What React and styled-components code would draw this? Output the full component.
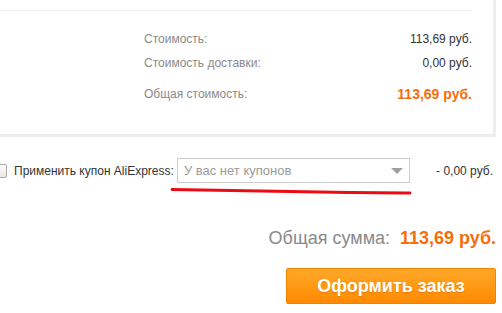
import React from "react";
import styled, { createGlobalStyle } from "styled-components";

const GlobalStyle = createGlobalStyle`
  html, body {
    margin: 0;
    padding: 0;
    background: #fff;
    font-family: "Liberation Sans", Arial, sans-serif;
    overflow: hidden;
  }
`;

const Page = styled.div`
  width: 502px;
  height: 313px;
  box-sizing: border-box;
  padding-right: 6px;
`;

const Card = styled.div`
  background: #fff;
  border-right: 3px solid #eeeeee;
  border-bottom: 3px solid #eeeeee;
  padding: 10px 21px 28px 0;
`;

const Divider = styled.div`
  height: 1px;
  background: #efefef;
`;

const Summary = styled.div`
  margin-left: 144px;
  padding-top: 16px;
  display: flex;
  flex-direction: column;
`;

const Row = styled.div`
  display: flex;
  justify-content: space-between;
  align-items: center;
  height: 24px;
  margin-top: ${(p) => (p.$total ? "7px" : "0")};
`;

const Label = styled.span`
  font-size: 12px;
  color: #8a8a8a;
`;

const Value = styled.span`
  font-size: ${(p) => (p.$accent ? "14px" : "12px")};
  font-weight: ${(p) => (p.$accent ? 700 : 400)};
  color: ${(p) => (p.$accent ? "#f76d0c" : "#333")};
`;

const CouponRow = styled.div`
  position: relative;
  display: flex;
  align-items: center;
  margin-top: 21px;
  height: 25px;
`;

const Check = styled.span`
  width: 12px;
  height: 12px;
  margin-left: -7px;
  border: 1px solid #a9a9a9;
  border-radius: 2px;
  background: linear-gradient(#fdfdfd, #e6e6e6);
  flex-shrink: 0;
`;

const CouponLabel = styled.span`
  margin-left: 7px;
  font-size: 12px;
  color: #333;
`;

const Select = styled.div`
  margin-left: 3px;
  width: 233px;
  height: 25px;
  box-sizing: border-box;
  border: 1px solid #cccccc;
  display: flex;
  align-items: center;
  justify-content: space-between;
  padding: 0 6px 0 6px;
  font-size: 13px;
  color: #9a9a9a;
`;

const Arrow = styled.span`
  width: 0;
  height: 0;
  border-left: 6px solid transparent;
  border-right: 6px solid transparent;
  border-top: 6px solid #a0a0a0;
`;

const Discount = styled.span`
  margin-left: auto;
  font-size: 12px;
  color: #333;
  margin-right: 3px;
`;

const Underline = styled.svg`
  position: absolute;
  left: 170px;
  top: 29px;
`;

const TotalRow = styled.div`
  display: flex;
  justify-content: flex-end;
  align-items: baseline;
  margin-top: 45px;
  font-size: 18px;
`;

const TotalLabel = styled.span`
  color: #8a8a8a;
  margin-right: 10px;
`;

const TotalValue = styled.span`
  color: #f76d0c;
  font-weight: 700;
`;

const Actions = styled.div`
  display: flex;
  justify-content: flex-end;
  margin-top: 19px;
`;

const OrderButton = styled.button`
  width: 210px;
  height: 36px;
  border: 1px solid #f08300;
  border-radius: 2px;
  background: linear-gradient(#ffa829, #ff8a00);
  color: #fff;
  font-family: "Liberation Sans", Arial, sans-serif;
  font-size: 18px;
  font-weight: 700;
  text-shadow: 0 1px 1px rgba(180, 80, 0, 0.35);
  cursor: pointer;
`;

export default function App() {
  return (
    <Page>
      <GlobalStyle />
      <Card>
        <Divider />
        <Summary>
          <Row>
            <Label>Стоимость:</Label>
            <Value>113,69 руб.</Value>
          </Row>
          <Row>
            <Label>Стоимость доставки:</Label>
            <Value>0,00 руб.</Value>
          </Row>
          <Row $total>
            <Label>Общая стоимость:</Label>
            <Value $accent>113,69 руб.</Value>
          </Row>
        </Summary>
      </Card>
      <CouponRow>
        <Check />
        <CouponLabel>Применить купон AliExpress:</CouponLabel>
        <Select>
          <span>У вас нет купонов</span>
          <Arrow />
        </Select>
        <Discount>- 0,00 руб.</Discount>
        <Underline width="244" height="9" viewBox="0 0 244 9">
          <path
            d="M2 2.5 C 60 3.5, 120 5, 180 5.5 S 230 6, 240 6"
            stroke="#ee0a14"
            strokeWidth="2.8"
            fill="none"
            strokeLinecap="round"
          />
        </Underline>
      </CouponRow>
      <TotalRow>
        <TotalLabel>Общая сумма:</TotalLabel>
        <TotalValue>113,69 руб.</TotalValue>
      </TotalRow>
      <Actions>
        <OrderButton>Оформить заказ</OrderButton>
      </Actions>
    </Page>
  );
}
